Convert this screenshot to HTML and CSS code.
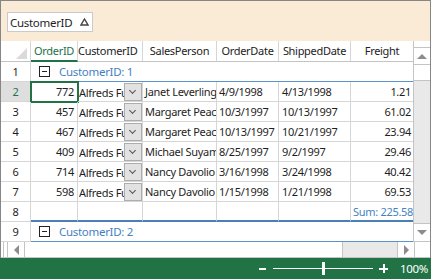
FILE: index.html
```html
<!DOCTYPE html>
<html>
<head>
	<title>Grid - grouping</title>
	<meta charset="utf-8">
	<link rel="stylesheet" href="styles.css">
</head>
<body>
	<div class="control">
		<div class="grouppanel">
			<div class="groupbtn">
				<span>CustomerID</span>
				<svg class="sortglyph" width="9" height="8" viewBox="0 0 9 8"><polygon points="4.5,1 8,7 1,7" fill="none" stroke="#444" stroke-width="1.4"/></svg>
			</div>
		</div>
		<div class="body">
			<div class="rows">
				<div class="row head">
					<div class="cell num corner"><svg width="11" height="11" viewBox="0 0 11 11"><polygon points="11,0 11,11 0,11" fill="#dadada"/></svg></div>
					<div class="cell c-id active">OrderID</div>
					<div class="cell c-cust">CustomerID</div>
					<div class="cell c-sales">SalesPerson</div>
					<div class="cell c-odate">OrderDate</div>
					<div class="cell c-sdate">ShippedDate</div>
					<div class="cell c-freight">Freight</div>
				</div>
				<div class="row">
					<div class="cell num">1</div>
					<div class="cell group"><span class="minus"></span><span>CustomerID: 1</span></div>
				</div>
				<div class="row">
					<div class="cell num current">2</div>
					<div class="cell c-id sel">772</div>
					<div class="cell c-cust"><span class="txt">Alfreds Futterkiste</span><span class="drop"></span></div>
					<div class="cell c-sales">Janet Leverling</div>
					<div class="cell c-odate">4/9/1998</div>
					<div class="cell c-sdate">4/13/1998</div>
					<div class="cell c-freight">1.21</div>
				</div>
				<div class="row">
					<div class="cell num">3</div>
					<div class="cell c-id">457</div>
					<div class="cell c-cust"><span class="txt">Alfreds Futterkiste</span><span class="drop"></span></div>
					<div class="cell c-sales">Margaret Peacock</div>
					<div class="cell c-odate">10/3/1997</div>
					<div class="cell c-sdate">10/13/1997</div>
					<div class="cell c-freight">61.02</div>
				</div>
				<div class="row">
					<div class="cell num">4</div>
					<div class="cell c-id">467</div>
					<div class="cell c-cust"><span class="txt">Alfreds Futterkiste</span><span class="drop"></span></div>
					<div class="cell c-sales">Margaret Peacock</div>
					<div class="cell c-odate">10/13/1997</div>
					<div class="cell c-sdate">10/21/1997</div>
					<div class="cell c-freight">23.94</div>
				</div>
				<div class="row">
					<div class="cell num">5</div>
					<div class="cell c-id">409</div>
					<div class="cell c-cust"><span class="txt">Alfreds Futterkiste</span><span class="drop"></span></div>
					<div class="cell c-sales">Michael Suyama</div>
					<div class="cell c-odate">8/25/1997</div>
					<div class="cell c-sdate">9/2/1997</div>
					<div class="cell c-freight">29.46</div>
				</div>
				<div class="row">
					<div class="cell num">6</div>
					<div class="cell c-id">714</div>
					<div class="cell c-cust"><span class="txt">Alfreds Futterkiste</span><span class="drop"></span></div>
					<div class="cell c-sales">Nancy Davolio</div>
					<div class="cell c-odate">3/16/1998</div>
					<div class="cell c-sdate">3/24/1998</div>
					<div class="cell c-freight">40.42</div>
				</div>
				<div class="row">
					<div class="cell num">7</div>
					<div class="cell c-id">598</div>
					<div class="cell c-cust"><span class="txt">Alfreds Futterkiste</span><span class="drop"></span></div>
					<div class="cell c-sales">Nancy Davolio</div>
					<div class="cell c-odate">1/15/1998</div>
					<div class="cell c-sdate">1/21/1998</div>
					<div class="cell c-freight">69.53</div>
				</div>
				<div class="row sumrow">
					<div class="cell num">8</div>
					<div class="cell c-id"></div>
					<div class="cell c-cust"></div>
					<div class="cell c-sales"></div>
					<div class="cell c-odate"></div>
					<div class="cell c-sdate"></div>
					<div class="cell c-freight sum">Sum: 225.58</div>
				</div>
				<div class="row">
					<div class="cell num">9</div>
					<div class="cell group"><span class="minus"></span><span>CustomerID: 2</span></div>
				</div>
			</div>
			<div class="vscroll">
				<div class="vs-cap"></div>
				<div class="vs-btn"><span class="arrow up"></span></div>
				<div class="vs-thumb"></div>
				<div class="vs-track"></div>
				<div class="vs-btn down"><span class="arrow dn"></span></div>
			</div>
		</div>
		<div class="hscroll">
			<div class="hs-split"></div>
			<div class="hs-btn"><span class="arrow lt"></span></div>
			<div class="hs-thumb"></div>
			<div class="hs-track"></div>
			<div class="hs-btn"><span class="arrow rt"></span></div>
			<div class="hs-corner"></div>
		</div>
	</div>
	<div class="status">
		<span class="zoom-minus"></span>
		<span class="slider"><span class="slider-thumb"></span></span>
		<span class="zoom-plus"></span>
		<span class="zoom-text">100%</span>
	</div>
</body>
</html>
```

FILE: styles.css
```css
*{
	padding: 0;
	margin: 0;
	box-sizing: border-box;
}
body{
	width: 431px;
	height: 279px;
	overflow: hidden;
	background: #fff;
	font-family: "Noto Sans", "Segoe UI", sans-serif;
	font-size: 11px;
	letter-spacing: -0.3px;
	color: #1e1e1e;
}
.control{
	border: 1px solid #868686;
	border-bottom: none;
}
.grouppanel{
	height: 40px;
	background: #faebd7;
	padding: 11px 0 0 6px;
}
.groupbtn{
	display: flex;
	align-items: center;
	width: 86px;
	height: 20px;
	background: #fff;
	border: 1px solid #cacaca;
	padding-left: 2px;
	font-size: 11.5px;
}
.groupbtn .sortglyph{
	margin-left: auto;
	margin-right: 3px;
}
.body{
	display: flex;
	height: 201px;
}
.rows{
	width: 412px;
}
.row{
	display: flex;
	height: 20px;
}
.cell{
	height: 20px;
	line-height: 19px;
	padding: 0 2px;
	white-space: nowrap;
	overflow: hidden;
	border-right: 1px solid #d6d6d6;
	border-bottom: 1px solid #d6d6d6;
}
.head{
	height: 21px;
}
.head .cell{
	height: 21px;
	line-height: 20px;
	text-align: center;
	padding: 0;
	border-bottom-color: #c4c4c4;
	color: #222;
}
.head .active{
	color: #217346;
	border-bottom: 2px solid #217346;
}
.corner{
	display: flex;
	justify-content: flex-end;
	align-items: flex-end;
	padding: 0 3px 2px 0 !important;
}
.num{
	width: 30px;
	text-align: center;
	padding: 0;
}
.num.current{
	background: #dedede;
	color: #217346;
}
.c-id{
	width: 47px;
	text-align: right;
	padding-right: 3px;
}
.c-cust{
	width: 65px;
	display: flex;
	padding: 0 0 0 1px;
}
.c-cust .txt{
	flex: 1;
	overflow: hidden;
	line-height: 22px;
}
.drop{
	position: relative;
	width: 18px;
	height: 18px;
	margin-top: 1px;
	background: #e2e2e2;
	border: 1px solid #adadad;
}
.drop:after{
	content: "";
	position: absolute;
	left: 5px;
	top: 4px;
	width: 4px;
	height: 4px;
	border-right: 1px solid #555;
	border-bottom: 1px solid #555;
	transform: rotate(45deg);
}
.c-sales{
	width: 74px;
}
.c-odate{
	width: 62px;
}
.c-sdate{
	width: 72px;
	padding-left: 3px;
}
.c-freight{
	width: 62px;
	text-align: right;
	border-right: none;
}
.sel{
	outline: 2px solid #217346;
	outline-offset: -1px;
}
.group{
	width: 382px;
	display: flex;
	align-items: center;
	padding-left: 8px;
	border-right: none;
	border-bottom-color: #5b93cc;
	color: #4482c3;
	font-size: 11.5px;
}
.minus{
	position: relative;
	width: 11px;
	height: 11px;
	margin-right: 9px;
	border: 1px solid #222;
}
.minus:after{
	content: "";
	position: absolute;
	left: 2px;
	top: 4px;
	width: 5px;
	height: 1px;
	background: #222;
}
.sumrow .cell{
	height: 20px;
	border-bottom: 2px solid #4a7fb8;
}
.sumrow .num{
	border-bottom: 1px solid #d6d6d6;
}
.sum{
	color: #4482c3;
	padding-right: 1px;
}
.vscroll{
	width: 17px;
	display: flex;
	flex-direction: column;
	border-left: 1px solid #c4c4c4;
	background: #e9e9e9;
}
.vs-cap{
	height: 7px;
	background: #fff;
	border-bottom: 1px solid #c4c4c4;
}
.vs-btn{
	height: 17px;
	display: flex;
	justify-content: center;
	align-items: center;
	background: #fff;
	border-bottom: 1px solid #c4c4c4;
}
.vs-btn.down{
	height: 19px;
	border-top: 1px solid #c4c4c4;
}
.vs-thumb{
	height: 16px;
	background: #fff;
	border-bottom: 1px solid #c4c4c4;
}
.vs-track{
	flex: 1;
}
.arrow{
	width: 0;
	height: 0;
	border: 4px solid transparent;
}
.arrow.up{
	border-bottom: 5px solid #8c8c8c;
	border-top-width: 0;
	border-left-width: 5px;
	border-right-width: 5px;
}
.arrow.dn{
	border-top: 5px solid #8c8c8c;
	border-bottom-width: 0;
	border-left-width: 5px;
	border-right-width: 5px;
}
.arrow.lt{
	border-right: 5px solid #8c8c8c;
	border-left-width: 0;
	border-top-width: 5px;
	border-bottom-width: 5px;
}
.arrow.rt{
	border-left: 5px solid #8c8c8c;
	border-right-width: 0;
	border-top-width: 5px;
	border-bottom-width: 5px;
}
.hscroll{
	display: flex;
	height: 16px;
	border-bottom: 1px solid #c4c4c4;
}
.hs-split{
	width: 7px;
	border-left: 2px solid #fff;
	border-right: 1px solid #c4c4c4;
	background: #fff;
	box-shadow: inset 1px 0 #c4c4c4;
}
.hs-btn{
	width: 17px;
	display: flex;
	justify-content: center;
	align-items: center;
	border-right: 1px solid #c4c4c4;
}
.hs-thumb{
	width: 318px;
	border-right: 1px solid #c4c4c4;
}
.hs-track{
	width: 55px;
	background: #e9e9e9;
	border-right: 1px solid #c4c4c4;
}
.hs-corner{
	flex: 1;
}
.status{
	display: flex;
	align-items: center;
	height: 21px;
	background: #217346;
	color: #fff;
	padding-left: 259px;
}
.zoom-minus{
	width: 7px;
	height: 2px;
	background: #fff;
}
.slider{
	position: relative;
	width: 100px;
	height: 1px;
	margin-left: 7px;
	background: #fff;
}
.slider-thumb{
	position: absolute;
	left: 49px;
	top: -6px;
	width: 3px;
	height: 13px;
	background: #fff;
}
.zoom-plus{
	position: relative;
	width: 9px;
	height: 9px;
	margin-left: 6px;
}
.zoom-plus:before,
.zoom-plus:after{
	content: "";
	position: absolute;
	background: #fff;
}
.zoom-plus:before{
	left: 0;
	top: 3.5px;
	width: 9px;
	height: 2px;
}
.zoom-plus:after{
	left: 3.5px;
	top: 0;
	width: 2px;
	height: 9px;
}
.zoom-text{
	margin-left: 12px;
	font-size: 11.5px;
}
```
